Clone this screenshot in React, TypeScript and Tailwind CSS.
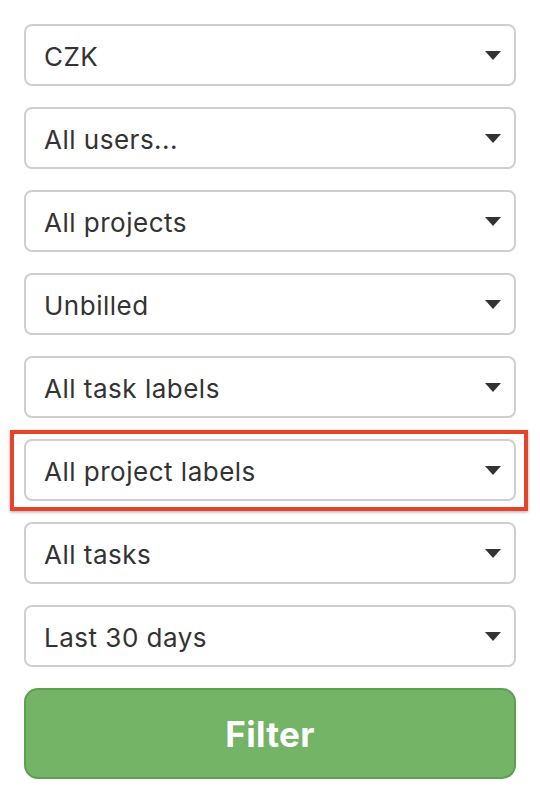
const FILTERS = [
  'CZK',
  'All users...',
  'All projects',
  'Unbilled',
  'All task labels',
  'All project labels',
  'All tasks',
  'Last 30 days',
];

// index of the select wrapped by the red annotation frame
const HIGHLIGHTED = 5;

function Caret() {
  return (
    <svg width="16" height="9" viewBox="0 0 16 9" className="shrink-0">
      <path d="M0 0h16L8 9z" fill="#333333" />
    </svg>
  );
}

function SelectBox({ label }: { label: string }) {
  return (
    <div className="flex items-center justify-between h-[62px] pl-[18px] pr-[13px] bg-white border-2 border-[#cfcfcf] rounded-[8px] text-[26px] tracking-[0.5px] text-[#333333] leading-none">
      <span className="pt-[3px]">{label}</span>
      <Caret />
    </div>
  );
}

export default function App() {
  return (
    <div
      className="w-[540px] h-[794px] bg-white pt-[24px] px-[24px]"
      style={{ fontFamily: 'Inter, "Liberation Sans", Arial, sans-serif' }}
    >
      <div className="flex flex-col gap-[21px]">
        {FILTERS.map((f, i) =>
          i === HIGHLIGHTED ? (
            <div key={f} className="relative">
              <SelectBox label={f} />
              <div className="absolute -left-[14px] -right-[12px] -top-[9px] -bottom-[10px] border-4 border-[#e5432b] shadow-[0_1px_3px_rgba(0,0,0,0.35)] pointer-events-none" />
            </div>
          ) : (
            <SelectBox key={f} label={f} />
          )
        )}
        <button className="h-[91px] w-full rounded-[14px] bg-[#73b467] border-2 border-[#5e9f52] text-white text-[35px] tracking-[0.3px] font-bold pt-[2px]">
          Filter
        </button>
      </div>
    </div>
  );
}
